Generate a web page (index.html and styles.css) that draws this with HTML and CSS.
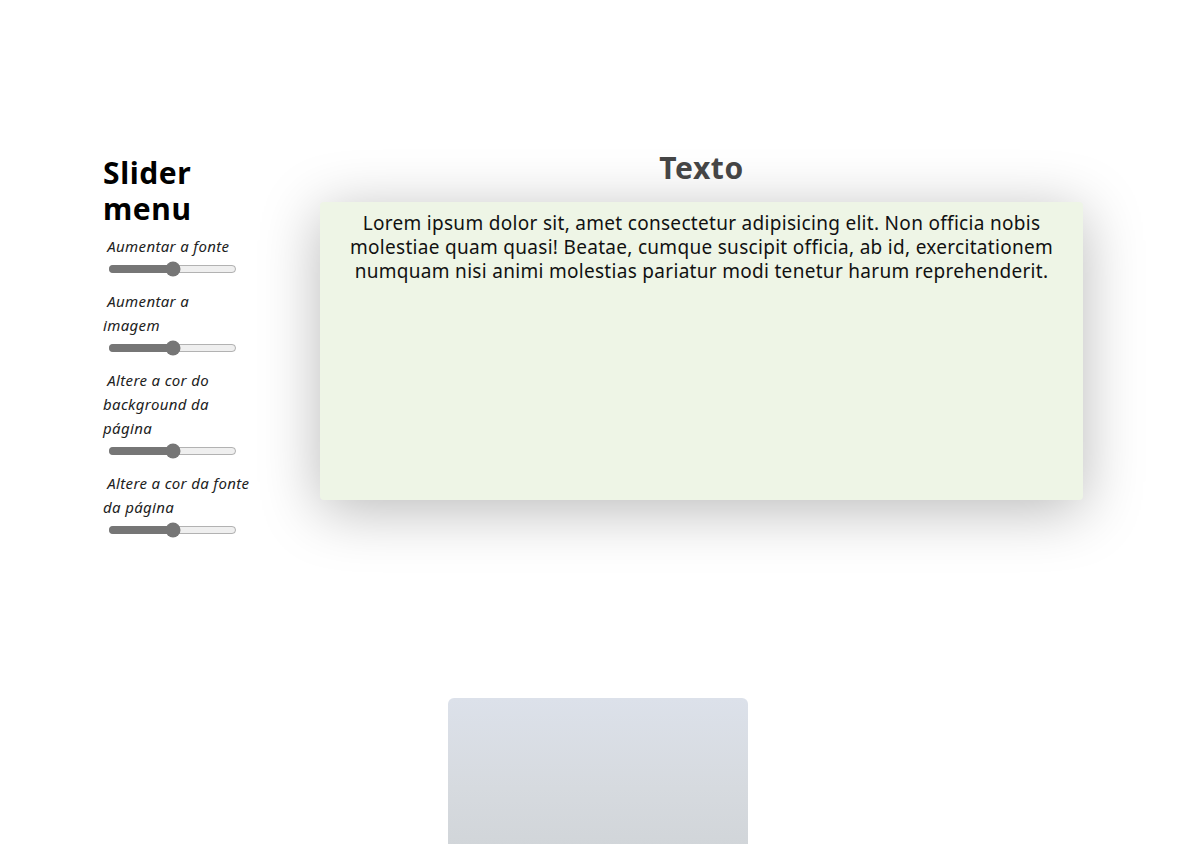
FILE: index.html
```html
<!DOCTYPE html>
<html lang="pt-BR">
<head>
<meta charset="utf-8">
<title>Slider menu</title>
<link rel="stylesheet" href="styles.css">
</head>
<body>
<div class="page">
  <div class="layout">
    <aside class="sidebar">
      <h1 class="side-title">Slider menu</h1>
      <div class="control">
        <label class="label">&nbsp;Aumentar a fonte</label>
        <input class="range" type="range" min="0" max="100" value="50">
      </div>
      <div class="control">
        <label class="label">&nbsp;Aumentar a<br>imagem</label>
        <input class="range" type="range" min="0" max="100" value="50">
      </div>
      <div class="control">
        <label class="label">&nbsp;Altere a cor do<br>background da<br>página</label>
        <input class="range" type="range" min="0" max="100" value="50">
      </div>
      <div class="control">
        <label class="label">&nbsp;Altere a cor da fonte<br>da página</label>
        <input class="range" type="range" min="0" max="100" value="50">
      </div>
    </aside>
    <main class="main">
      <div class="card">
        <h2 class="card-title">Texto</h2>
        <div class="card-body">
          <p class="text">Lorem ipsum dolor sit, amet consectetur adipisicing elit. Non officia nobis molestiae quam quasi! Beatae, cumque suscipit officia, ab id, exercitationem numquam nisi animi molestias pariatur modi tenetur harum reprehenderit.</p>
        </div>
      </div>
    </main>
  </div>
  <div class="image-wrap">
    <div class="image"></div>
  </div>
</div>
</body>
</html>
```

FILE: styles.css
```css
html, body {
  margin: 0;
  padding: 0;
  background: #ffffff;
}
body {
  font-family: "Noto Sans", "Open Sans", sans-serif;
  color: #111;
  overflow: hidden;
  height: 844px;
}
.page {
  padding-top: 155px;
}
.layout {
  display: flex;
  padding-left: 103px;
  gap: 67px;
}
.sidebar {
  width: 150px;
  display: flex;
  flex-direction: column;
}
.side-title {
  margin: 0 0 7px 0;
  font-size: 30px;
  line-height: 36px;
  font-weight: 700;
  color: #000;
  letter-spacing: 0.6px;
}
.control {
  display: flex;
  flex-direction: column;
  align-items: flex-start;
  margin-bottom: 11px;
}
.label {
  font-style: italic;
  font-size: 15px;
  line-height: 24px;
  letter-spacing: 0.35px;
  color: #222;
  white-space: nowrap;
}
.range {
  width: 129px;
  height: 16px;
  margin: 3px 0 1px 5px;
  accent-color: #767676;
}
.main {
  width: 763px;
}
.card-title {
  margin: 0;
  height: 47px;
  text-align: center;
  font-size: 30px;
  line-height: 26px;
  font-weight: 700;
  letter-spacing: 0.6px;
  color: #454545;
}
.card-body {
  height: 298px;
  background: #eef5e6;
  border-radius: 4px;
  box-shadow: 0 10px 60px rgba(0, 0, 0, 0.28);
}
.text {
  margin: 0;
  padding: 9px 18px 0;
  text-align: center;
  font-size: 19px;
  line-height: 24px;
  letter-spacing: 0.3px;
  color: #111;
}
.image-wrap {
  display: flex;
  justify-content: center;
  margin-top: 148px;
}
.image {
  width: 300px;
  height: 200px;
  margin-left: -2px;
  border-radius: 6px;
  background: linear-gradient(180deg, #dce1ea 0%, #d6dadf 45%, #cdd1d4 100%);
}
```
